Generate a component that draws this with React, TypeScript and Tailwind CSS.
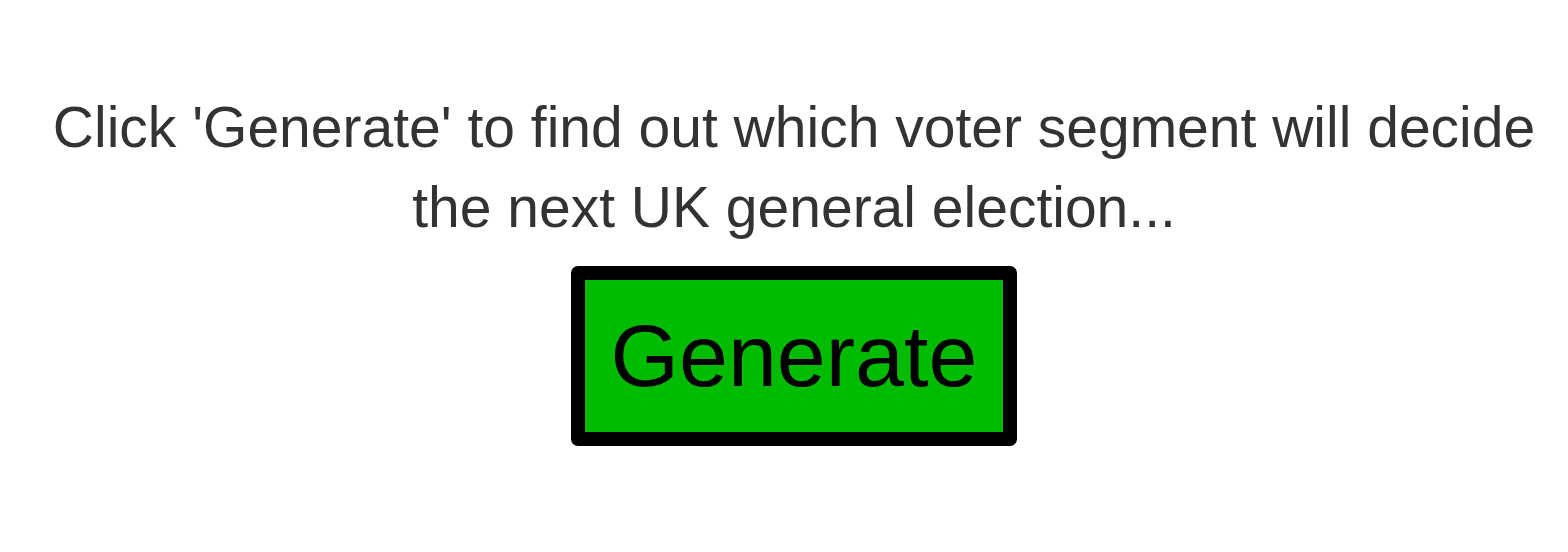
import React from 'react';

const App: React.FC = () => {
  return (
    <div className="w-[1568px] h-[552px] bg-white flex flex-col items-center pt-[87px] pl-[20px] font-['Liberation_Sans',Arial,sans-serif]">
      <p className="text-[57px] leading-[80px] text-[#333333] text-center">
        Click 'Generate' to find out which voter segment will decide the next UK general election...
      </p>
      <button className="mt-[19px] bg-[#00bb00] border-[14px] border-black rounded-[7px] px-[26px] py-[25px] text-[88px] leading-[102px] text-black">
        Generate
      </button>
    </div>
  );
};

export default App;
